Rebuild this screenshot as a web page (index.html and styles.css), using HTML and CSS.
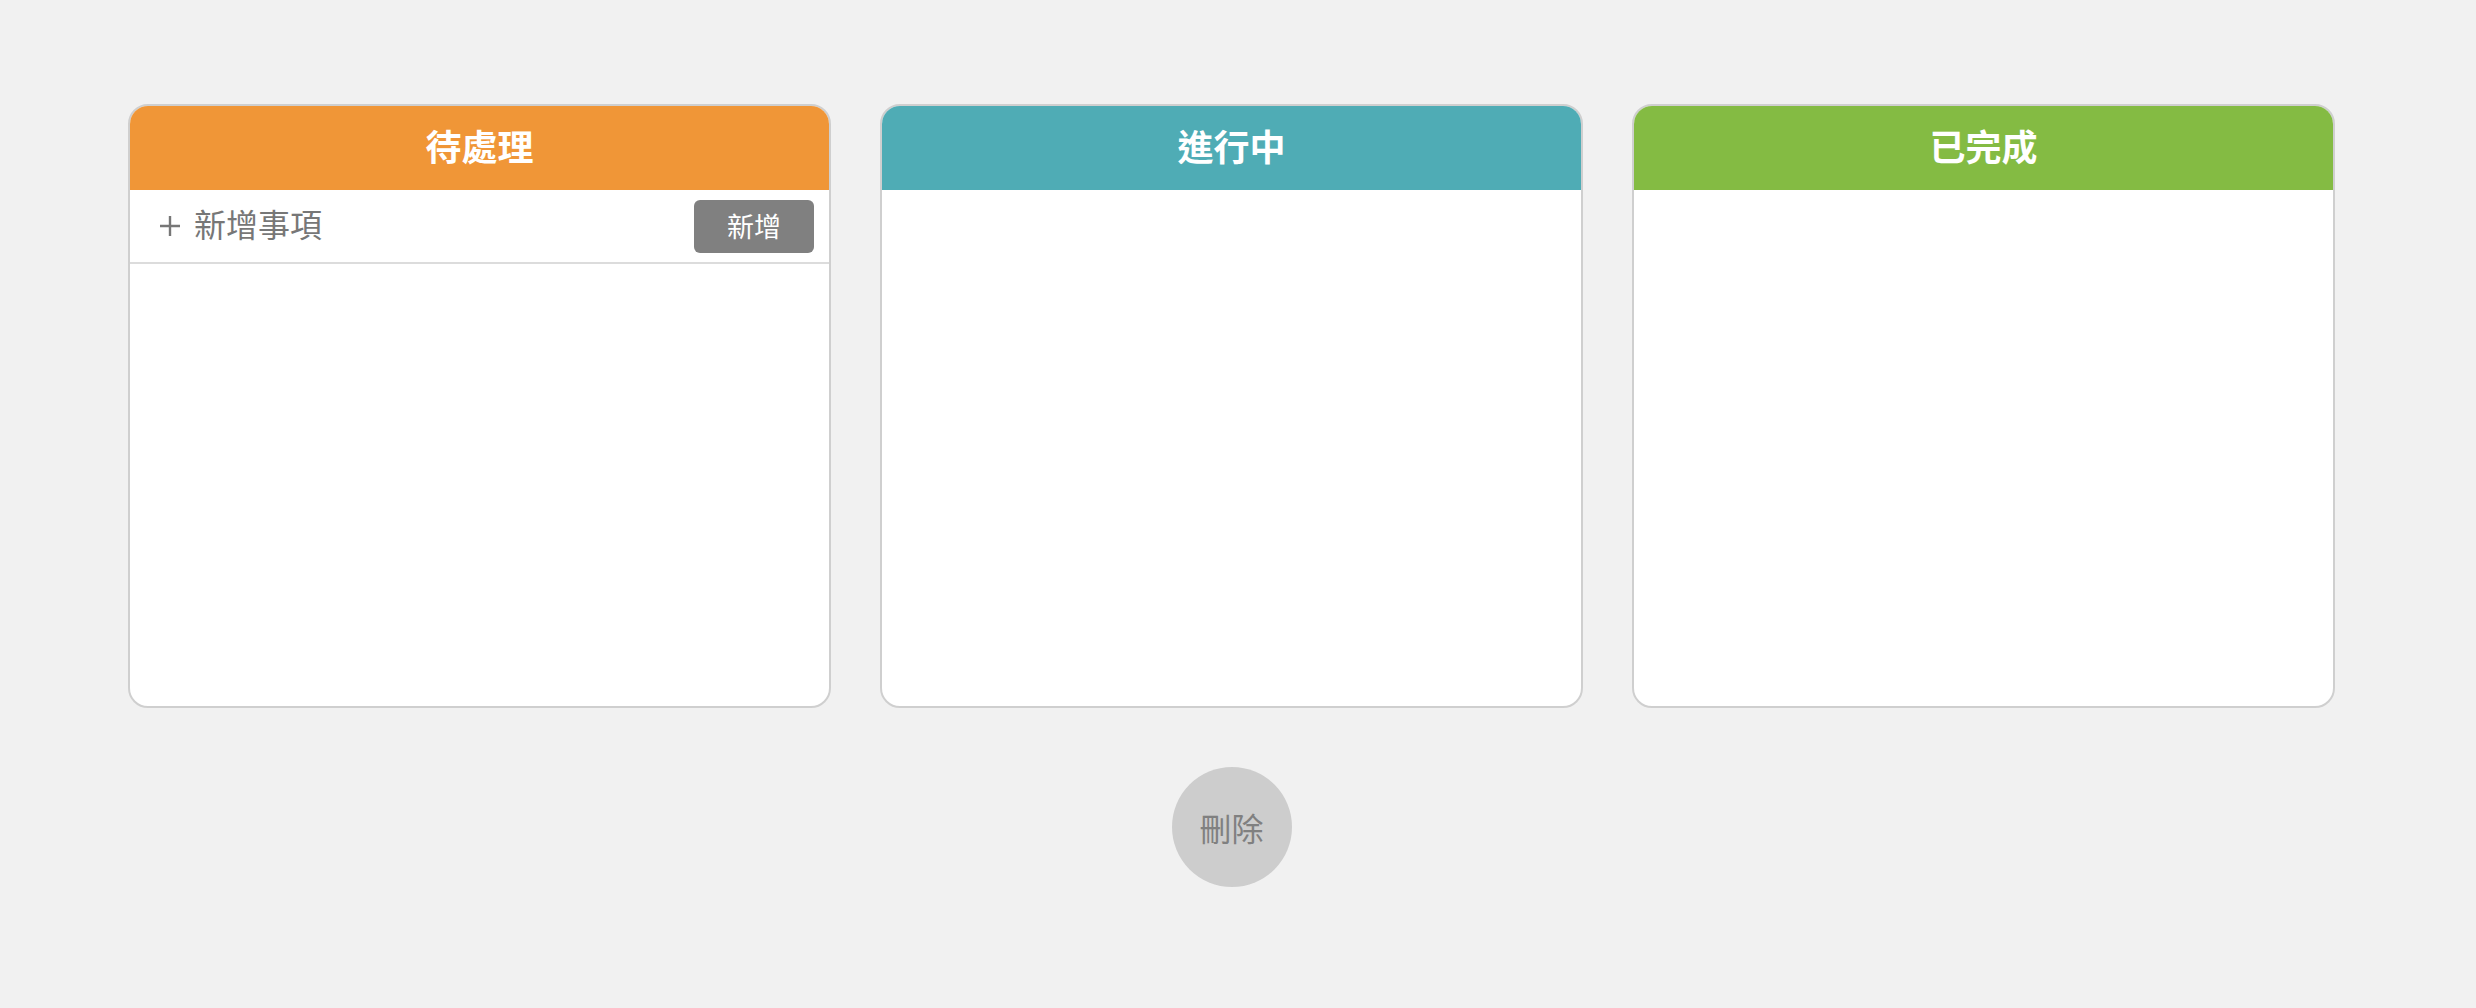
FILE: index.html
```html
<!DOCTYPE html>
<html lang="zh-Hant">
<head>
<meta charset="utf-8">
<title>看板</title>
<link rel="stylesheet" href="styles.css">
</head>
<body>
<div class="app">
  <div class="board">
    <section class="column">
      <header class="column-header todo">待處理</header>
      <div class="add-row">
        <svg class="plus" width="20" height="20" viewBox="0 0 20 20"><path d="M10 0V20M0 10H20" stroke="#777" stroke-width="2.4" fill="none"/></svg>
        <span class="add-placeholder">新增事項</span>
        <button class="add-btn">新增</button>
      </div>
    </section>
    <section class="column">
      <header class="column-header doing">進行中</header>
    </section>
    <section class="column">
      <header class="column-header done">已完成</header>
    </section>
  </div>
  <div class="trash">刪除</div>
</div>
</body>
</html>
```
FILE: styles.css
```css
html, body {
  margin: 0;
  padding: 0;
  background: #f1f1f1;
  font-family: "Noto Sans CJK TC", "Noto Sans", sans-serif;
}
.app {
  width: 2207px;
  margin-left: 128px;
  padding-top: 104px;
}
.board {
  display: flex;
  gap: 49px;
}
.column {
  width: 703px;
  height: 604px;
  box-sizing: border-box;
  border: 2px solid #cfcfcf;
  border-radius: 20px;
  background: #fff;
  overflow: hidden;
  display: flex;
  flex-direction: column;
}
.column-header {
  height: 84px;
  box-sizing: border-box;
  padding-bottom: 6px;
  flex: none;
  display: flex;
  align-items: center;
  justify-content: center;
  color: #fff;
  font-size: 36px;
  font-weight: bold;
  line-height: 1;
}
.todo { background: #f09637; }
.doing { background: #4facb5; }
.done { background: #84bb43; }
.add-row {
  height: 72px;
  flex: none;
  border-bottom: 2px solid #dcdcdc;
  display: flex;
  align-items: center;
  padding: 0 15px 0 30px;
}
.plus {
  flex: none;
  margin-right: 14px;
}
.add-placeholder {
  flex: 1;
  font-size: 32px;
  color: #777;
  line-height: 1;
  padding-bottom: 6px;
}
.add-btn {
  width: 120px;
  height: 53px;
  border: none;
  border-radius: 6px;
  background: #808080;
  color: #fff;
  font-family: inherit;
  font-size: 27px;
  padding: 0 0 3px;
  margin-top: 1px;
}
.trash {
  width: 120px;
  height: 120px;
  margin: 59px auto 0;
  border-radius: 50%;
  background: #cdcdcd;
  color: #808080;
  font-size: 32px;
  display: flex;
  align-items: center;
  justify-content: center;
}
```
